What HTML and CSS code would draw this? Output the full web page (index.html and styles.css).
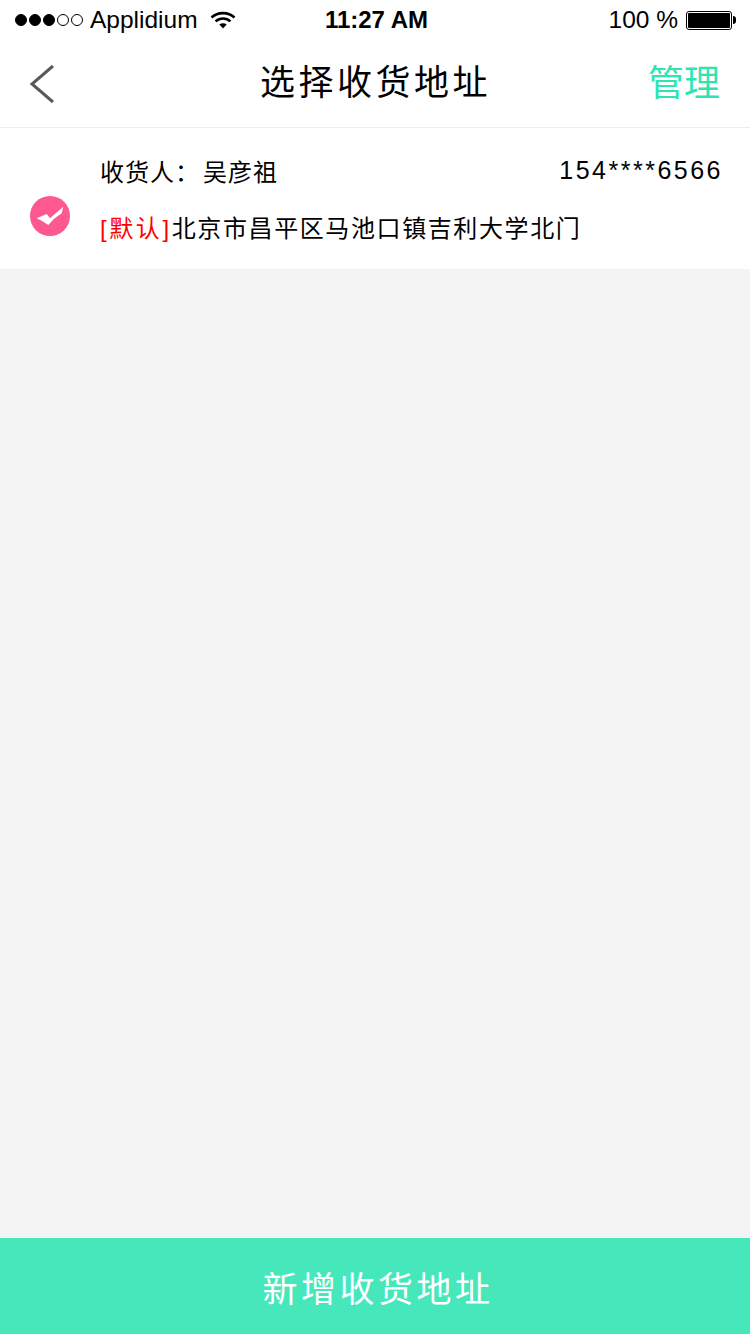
FILE: index.html
```html
<!DOCTYPE html>
<html lang="zh-CN">

<head>
    <meta charset="UTF-8">
    <meta name="viewport" content="width=device-width, initial-scale=1.0">
    <title>选择收货地址</title>
    <link rel="stylesheet" href="styles.css">
</head>

<body>
    <div class="status-bar">
        <div class="status-left">
            <span class="signal">
                <i class="on"></i><i class="on"></i><i class="on"></i><i></i><i></i>
            </span>
            <span class="carrier">Applidium</span>
            <svg class="wifi" width="26" height="18" viewBox="0 0 26 18">
                <path d="M1.5 6.500C7.800.6 18.200.6 24.500 6.500" fill="none" stroke="#000" stroke-width="2.600" />
                <path d="M5.600 10.400c4.200-3.800 10.600-3.800 14.800 0" fill="none" stroke="#000" stroke-width="2.600" />
                <path d="M9.300 13.400c2.200-1.600 5.200-1.600 7.400 0L13 17.400z" fill="#000" />
            </svg>
        </div>
        <div class="status-time">11:27 AM</div>
        <div class="status-right">
            <span class="percent">100 %</span>
            <span class="battery"><span class="battery-level"></span></span>
            <span class="battery-tip"></span>
        </div>
    </div>

    <header class="nav">
        <svg class="back" width="26" height="40" viewBox="0 0 26 40">
            <path d="M24 2L3 20l21 18" fill="none" stroke="#5a5a5a" stroke-width="3" />
        </svg>
        <h1 class="nav-title">选择收货地址</h1>
        <a class="nav-action">管理</a>
    </header>

    <main class="content">
        <section class="address">
            <svg class="check" width="40" height="40" viewBox="0 0 40 40">
                <circle cx="20" cy="20" r="20" fill="#fd5990" />
                <path d="M6.700 22.300L16.700 18L20 22.300L33.300 10.700L31.700 17.300Q24 22 18.300 29Q13 25 6.700 22.300z" fill="#fff" />
            </svg>
            <div class="address-info">
                <div class="address-top">
                    <span class="receiver">收货人：<span class="receiver-name">吴彦祖</span></span>
                    <span class="phone">154****6566</span>
                </div>
                <div class="address-line"><span class="default-tag">[默认]</span>北京市昌平区马池口镇吉利大学北门</div>
            </div>
        </section>
    </main>

    <footer class="add-btn">新增收货地址</footer>
</body>

</html>
```

FILE: styles.css
```css
* {
    margin: 0;
    padding: 0;
    box-sizing: border-box;
}

body {
    width: 750px;
    height: 1334px;
    display: flex;
    flex-direction: column;
    font-family: 'Liberation Sans', 'Noto Sans CJK SC', sans-serif;
    color: #000;
    background-color: #fff;
    overflow: hidden;
}

.status-bar {
    height: 40px;
    flex-shrink: 0;
    display: grid;
    grid-template-columns: 1fr auto 1fr;
    align-items: center;
    padding: 0 14px 0 15px;
    font-size: 24.500px;
}

.status-left,
.status-right {
    display: flex;
    align-items: center;
}

.status-right {
    justify-content: flex-end;
}

.signal {
    display: flex;
    gap: 2px;
    margin-right: 7px;
}

.signal i {
    width: 12px;
    height: 12px;
    border: 1px solid #000;
    border-radius: 50%;
}

.signal i.on {
    background-color: #000;
}

.wifi {
    margin-left: 12px;
}

.status-time {
    font-size: 24px;
    font-weight: bold;
    padding-left: 2px;
}

.percent {
    margin-right: 8px;
}

.battery {
    width: 46px;
    height: 19px;
    border: 1px solid #000;
    border-radius: 3px;
    padding: 1px;
}

.battery-level {
    display: block;
    height: 100%;
    background-color: #000;
    border-radius: 1px;
}

.battery-tip {
    width: 3px;
    height: 8px;
    margin-left: 1px;
    background-color: #000;
    border-radius: 0 3px 3px 0;
}

.nav {
    height: 88px;
    flex-shrink: 0;
    display: grid;
    grid-template-columns: 1fr auto 1fr;
    align-items: center;
    padding: 0 30px 8px 29px;
    border-bottom: 1px solid #ececec;
}

.back {
    margin-top: 8px;
}

.nav-title {
    font-size: 35px;
    font-weight: normal;
    letter-spacing: 3.500px;
    padding-left: 2px;
}

.nav-action {
    justify-self: end;
    font-size: 36px;
    color: #2ee5b0;
}

.content {
    flex: 1;
    background-color: #f4f4f4;
}

.address {
    height: 141px;
    display: flex;
    align-items: center;
    padding: 0 29px 0 30px;
    background-color: #fff;
}

.check {
    flex-shrink: 0;
    margin: 35px 30px 0 0;
}

.address-info {
    flex: 1;
    display: flex;
    flex-direction: column;
    gap: 28px;
    padding-top: 2px;
}

.address-top {
    display: flex;
    justify-content: space-between;
    align-items: center;
    height: 30px;
    font-size: 24px;
    letter-spacing: 1px;
}

.receiver-name {
    margin-left: 3px;
}

.phone {
    font-size: 25px;
    letter-spacing: 2.500px;
    margin-right: -2px;
}

.address-line {
    height: 30px;
    line-height: 30px;
    font-size: 24px;
    letter-spacing: 1.600px;
}

.default-tag {
    letter-spacing: 2.600px;
    color: #f00;
}

.add-btn {
    height: 96px;
    flex-shrink: 0;
    display: flex;
    align-items: center;
    justify-content: center;
    padding-left: 6px;
    font-size: 35px;
    letter-spacing: 3.500px;
    color: #fff;
    background-color: #46e8bb;
}
```
